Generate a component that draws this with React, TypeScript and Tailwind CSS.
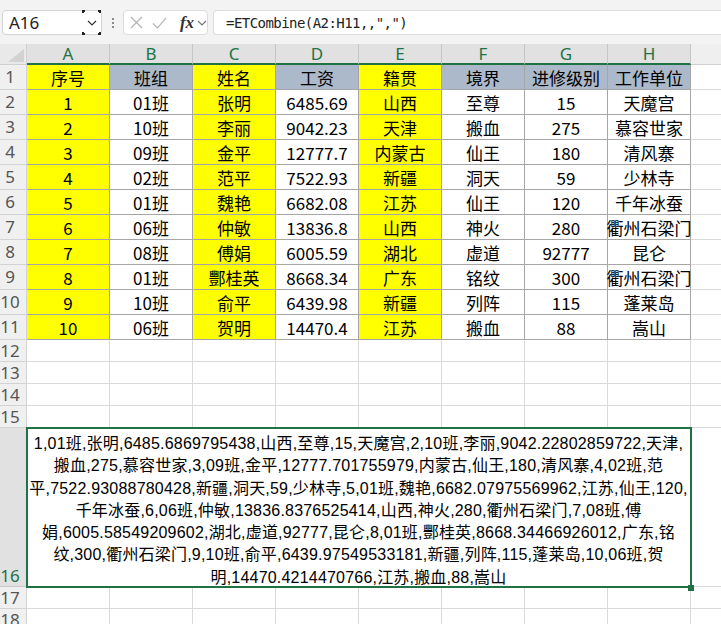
import React from 'react';

const COLS = ['A', 'B', 'C', 'D', 'E', 'F', 'G', 'H'];
const HEADER = ['序号', '班组', '姓名', '工资', '籍贯', '境界', '进修级别', '工作单位'];
const HEADER_BG = [
  'bg-[#ffff00]',
  'bg-[#acb9ca]',
  'bg-[#ffff00]',
  'bg-[#acb9ca]',
  'bg-[#ffff00]',
  'bg-[#acb9ca]',
  'bg-[#acb9ca]',
  'bg-[#acb9ca]',
];
const ROW_BG = [
  'bg-[#ffff00]',
  'bg-white',
  'bg-[#ffff00]',
  'bg-white',
  'bg-[#ffff00]',
  'bg-white',
  'bg-white',
  'bg-white',
];
const DATA = [
  ['1', '01班', '张明', '6485.69', '山西', '至尊', '15', '天魔宫'],
  ['2', '10班', '李丽', '9042.23', '天津', '搬血', '275', '慕容世家'],
  ['3', '09班', '金平', '12777.7', '内蒙古', '仙王', '180', '清风寨'],
  ['4', '02班', '范平', '7522.93', '新疆', '洞天', '59', '少林寺'],
  ['5', '01班', '魏艳', '6682.08', '江苏', '仙王', '120', '千年冰蚕'],
  ['6', '06班', '仲敏', '13836.8', '山西', '神火', '280', '衢州石梁门'],
  ['7', '08班', '傅娟', '6005.59', '湖北', '虚道', '92777', '昆仑'],
  ['8', '01班', '酆桂英', '8668.34', '广东', '铭纹', '300', '衢州石梁门'],
  ['9', '10班', '俞平', '6439.98', '新疆', '列阵', '115', '蓬莱岛'],
  ['10', '06班', '贺明', '14470.4', '江苏', '搬血', '88', '嵩山'],
];
const LINES = [
  '1,01班,张明,6485.6869795438,山西,至尊,15,天魔宫,2,10班,李丽,9042.22802859722,天津,',
  '搬血,275,慕容世家,3,09班,金平,12777.701755979,内蒙古,仙王,180,清风寨,4,02班,范',
  '平,7522.93088780428,新疆,洞天,59,少林寺,5,01班,魏艳,6682.07975569962,江苏,仙王,120,',
  '千年冰蚕,6,06班,仲敏,13836.8376525414,山西,神火,280,衢州石梁门,7,08班,傅',
  '娟,6005.58549209602,湖北,虚道,92777,昆仑,8,01班,酆桂英,8668.34466926012,广东,铭',
  '纹,300,衢州石梁门,9,10班,俞平,6439.97549533181,新疆,列阵,115,蓬莱岛,10,06班,贺',
  '明,14470.4214470766,江苏,搬血,88,嵩山',
];

const NUM_FONT = { fontFamily: '"Noto Sans", sans-serif' };

function RowHead({ n, selected }: { n: number; selected?: boolean }) {
  if (selected) {
    return (
      <div className="w-[27px] shrink-0 bg-[#e1e1e1] border-r border-b border-[#c9c9c9] flex items-end">
        <div className="w-[20px] text-center text-[#1f7244] text-[17px] leading-[21px]" style={NUM_FONT}>
          {n}
        </div>
      </div>
    );
  }
  return (
    <div className="w-[27px] shrink-0 bg-[#f0f0f0] border-r border-b border-[#d3d3d3] flex items-center overflow-hidden">
      <div className="w-[20px] text-center text-[#555555] text-[17px] leading-[18px]" style={NUM_FONT}>
        {n}
      </div>
    </div>
  );
}

function EmptyRow({ n, h }: { n: number; h: string }) {
  return (
    <div className={`flex ${h}`}>
      <RowHead n={n} />
      {COLS.map((c) => (
        <div key={c} className="w-[83px] shrink-0 border-r border-b border-[#dadada]" />
      ))}
      <div className="flex-1 border-b border-[#dadada]" />
    </div>
  );
}

function Chevron({ className }: { className?: string }) {
  return (
    <svg className={className} width="10" height="6" viewBox="0 0 10 6" fill="none">
      <path d="M1 1 L5 5 L9 1" stroke="currentColor" strokeWidth="1.2" />
    </svg>
  );
}

export default function App() {
  return (
    <div
      className="w-[721px] h-[624px] overflow-hidden bg-white text-black"
      style={{ fontFamily: '"Noto Sans CJK SC", "Noto Sans", sans-serif' }}
    >
      {/* toolbar */}
      <div className="h-[44px] bg-[#f3f3f3] flex items-start pt-[10px] pl-[2px]">
        {/* name box */}
        <div className="relative w-[100px] h-[25px] bg-white border border-[#d4d4d4] rounded-[4px] flex items-center">
          <span className="pl-[6px] text-[17px] text-[#222222] leading-none" style={NUM_FONT}>
            A16
          </span>
          <div className="absolute right-0 top-[-1px] w-[19px] h-[25px] flex items-center justify-center text-[#333333]">
            <span className="absolute left-0 top-0 w-[3px] h-[3px] border-l-2 border-t-2 border-[#222222]" />
            <span className="absolute left-0 bottom-0 w-[3px] h-[3px] border-l-2 border-b-2 border-[#222222]" />
            <span className="absolute right-0 top-0 w-[3px] h-[3px] border-r-2 border-t-2 border-[#222222]" />
            <span className="absolute right-0 bottom-0 w-[3px] h-[3px] border-r-2 border-b-2 border-[#222222]" />
            <Chevron />
          </div>
        </div>
        {/* dots */}
        <div className="w-[21px] h-[25px] flex flex-col items-center justify-center gap-[2px]">
          <span className="w-[2px] h-[2px] bg-[#8a8a8a]" />
          <span className="w-[2px] h-[2px] bg-[#8a8a8a]" />
          <span className="w-[2px] h-[2px] bg-[#8a8a8a]" />
        </div>
        {/* cancel / confirm / fx */}
        <div className="w-[85px] h-[25px] bg-white border border-[#dcdcdc] rounded-[4px] flex items-center pl-[6px]">
          <svg width="13" height="13" viewBox="0 0 13 13" fill="none">
            <path d="M1 1 L12 12 M12 1 L1 12" stroke="#b3b3b3" strokeWidth="1.2" />
          </svg>
          <svg className="ml-[9px]" width="15" height="12" viewBox="0 0 15 12" fill="none">
            <path d="M1 6.5 L5.5 11 L14 1" stroke="#b3b3b3" strokeWidth="1.2" />
          </svg>
          <span
            className="ml-[13px] text-[17px] italic font-bold text-[#333333] leading-none"
            style={{ fontFamily: '"Liberation Serif", serif' }}
          >
            fx
          </span>
          <Chevron className="ml-[3px] text-[#777777]" />
        </div>
        {/* formula */}
        <div className="ml-[5px] flex-1 h-[25px] bg-white border border-[#dcdcdc] border-r-0 rounded-l-[4px] flex items-center pl-[12px]">
          <span
            className="text-[14px] tracking-[-0.55px] text-[#222222] leading-none"
            style={{ fontFamily: '"DejaVu Sans Mono", monospace' }}
          >
            =ETCombine(A2:H11,,",")
          </span>
        </div>
      </div>

      {/* column headers */}
      <div className="flex h-[21px]">
        <div className="relative w-[27px] shrink-0 bg-[#e9e9e9] border-r border-b border-[#d0d0d0]">
          <svg className="absolute left-[8px] top-[5px]" width="16" height="13" viewBox="0 0 16 13">
            <polygon points="16,0 16,13 0,13" fill="#d2d2d2" />
          </svg>
        </div>
        {COLS.map((c) => (
          <div
            key={c}
            className="w-[83px] shrink-0 bg-[#e1e1e1] border-r border-[#c6c6c6] border-b-2 border-b-[#1f7244] flex items-center justify-center text-[17px] text-[#217346] leading-none"
            style={NUM_FONT}
          >
            {c}
          </div>
        ))}
        <div className="flex-1 bg-[#efefef] border-b border-[#d0d0d0]" />
      </div>

      {/* row 1 */}
      <div className="flex h-[25px]">
        <RowHead n={1} />
        {HEADER.map((t, i) => (
          <div
            key={i}
            className={`w-[83px] shrink-0 ${HEADER_BG[i]} border-r border-b border-[#a6a6a6] flex items-center justify-center text-[17px] leading-none whitespace-nowrap`}
          >
            {t}
          </div>
        ))}
        <div className="flex-1 border-b border-[#dadada]" />
      </div>

      {/* rows 2-11 */}
      {DATA.map((r, ri) => (
        <div key={ri} className="flex h-[25px]">
          <RowHead n={ri + 2} />
          {r.map((t, i) => (
            <div
              key={i}
              className={`w-[83px] shrink-0 ${ROW_BG[i]} border-r border-b border-[#a6a6a6] flex items-center justify-center text-[17px] leading-none whitespace-nowrap`}
            >
              {t}
            </div>
          ))}
          <div className="flex-1 border-b border-[#dadada]" />
        </div>
      ))}

      {[12, 13, 14, 15].map((n) => (
        <EmptyRow key={n} n={n} h="h-[22px]" />
      ))}

      {/* row 16 */}
      <div className="flex h-[159px]">
        <RowHead n={16} selected />
        <div className="relative w-[664px] shrink-0 border-r border-b border-[#dadada]">
          <div
            className="pt-[5px] text-center text-[16px] leading-[22.3px] tracking-[0.2px] text-black whitespace-nowrap"
            style={{ fontFamily: '"Liberation Sans", "Noto Sans CJK SC", sans-serif' }}
          >
            {LINES.map((l, i) => (
              <div key={i}>{l}</div>
            ))}
          </div>
          <div className="absolute left-[-1px] top-[-1px] right-[-2px] bottom-[-2px] border-2 border-[#1f7244] pointer-events-none" />
          <div className="absolute right-[-4px] bottom-[-5px] w-[6px] h-[6px] bg-[#1f7244]" />
        </div>
        <div className="flex-1 border-b border-[#dadada]" />
      </div>

      {[17, 18].map((n) => (
        <EmptyRow key={n} n={n} h="h-[22px]" />
      ))}
    </div>
  );
}
